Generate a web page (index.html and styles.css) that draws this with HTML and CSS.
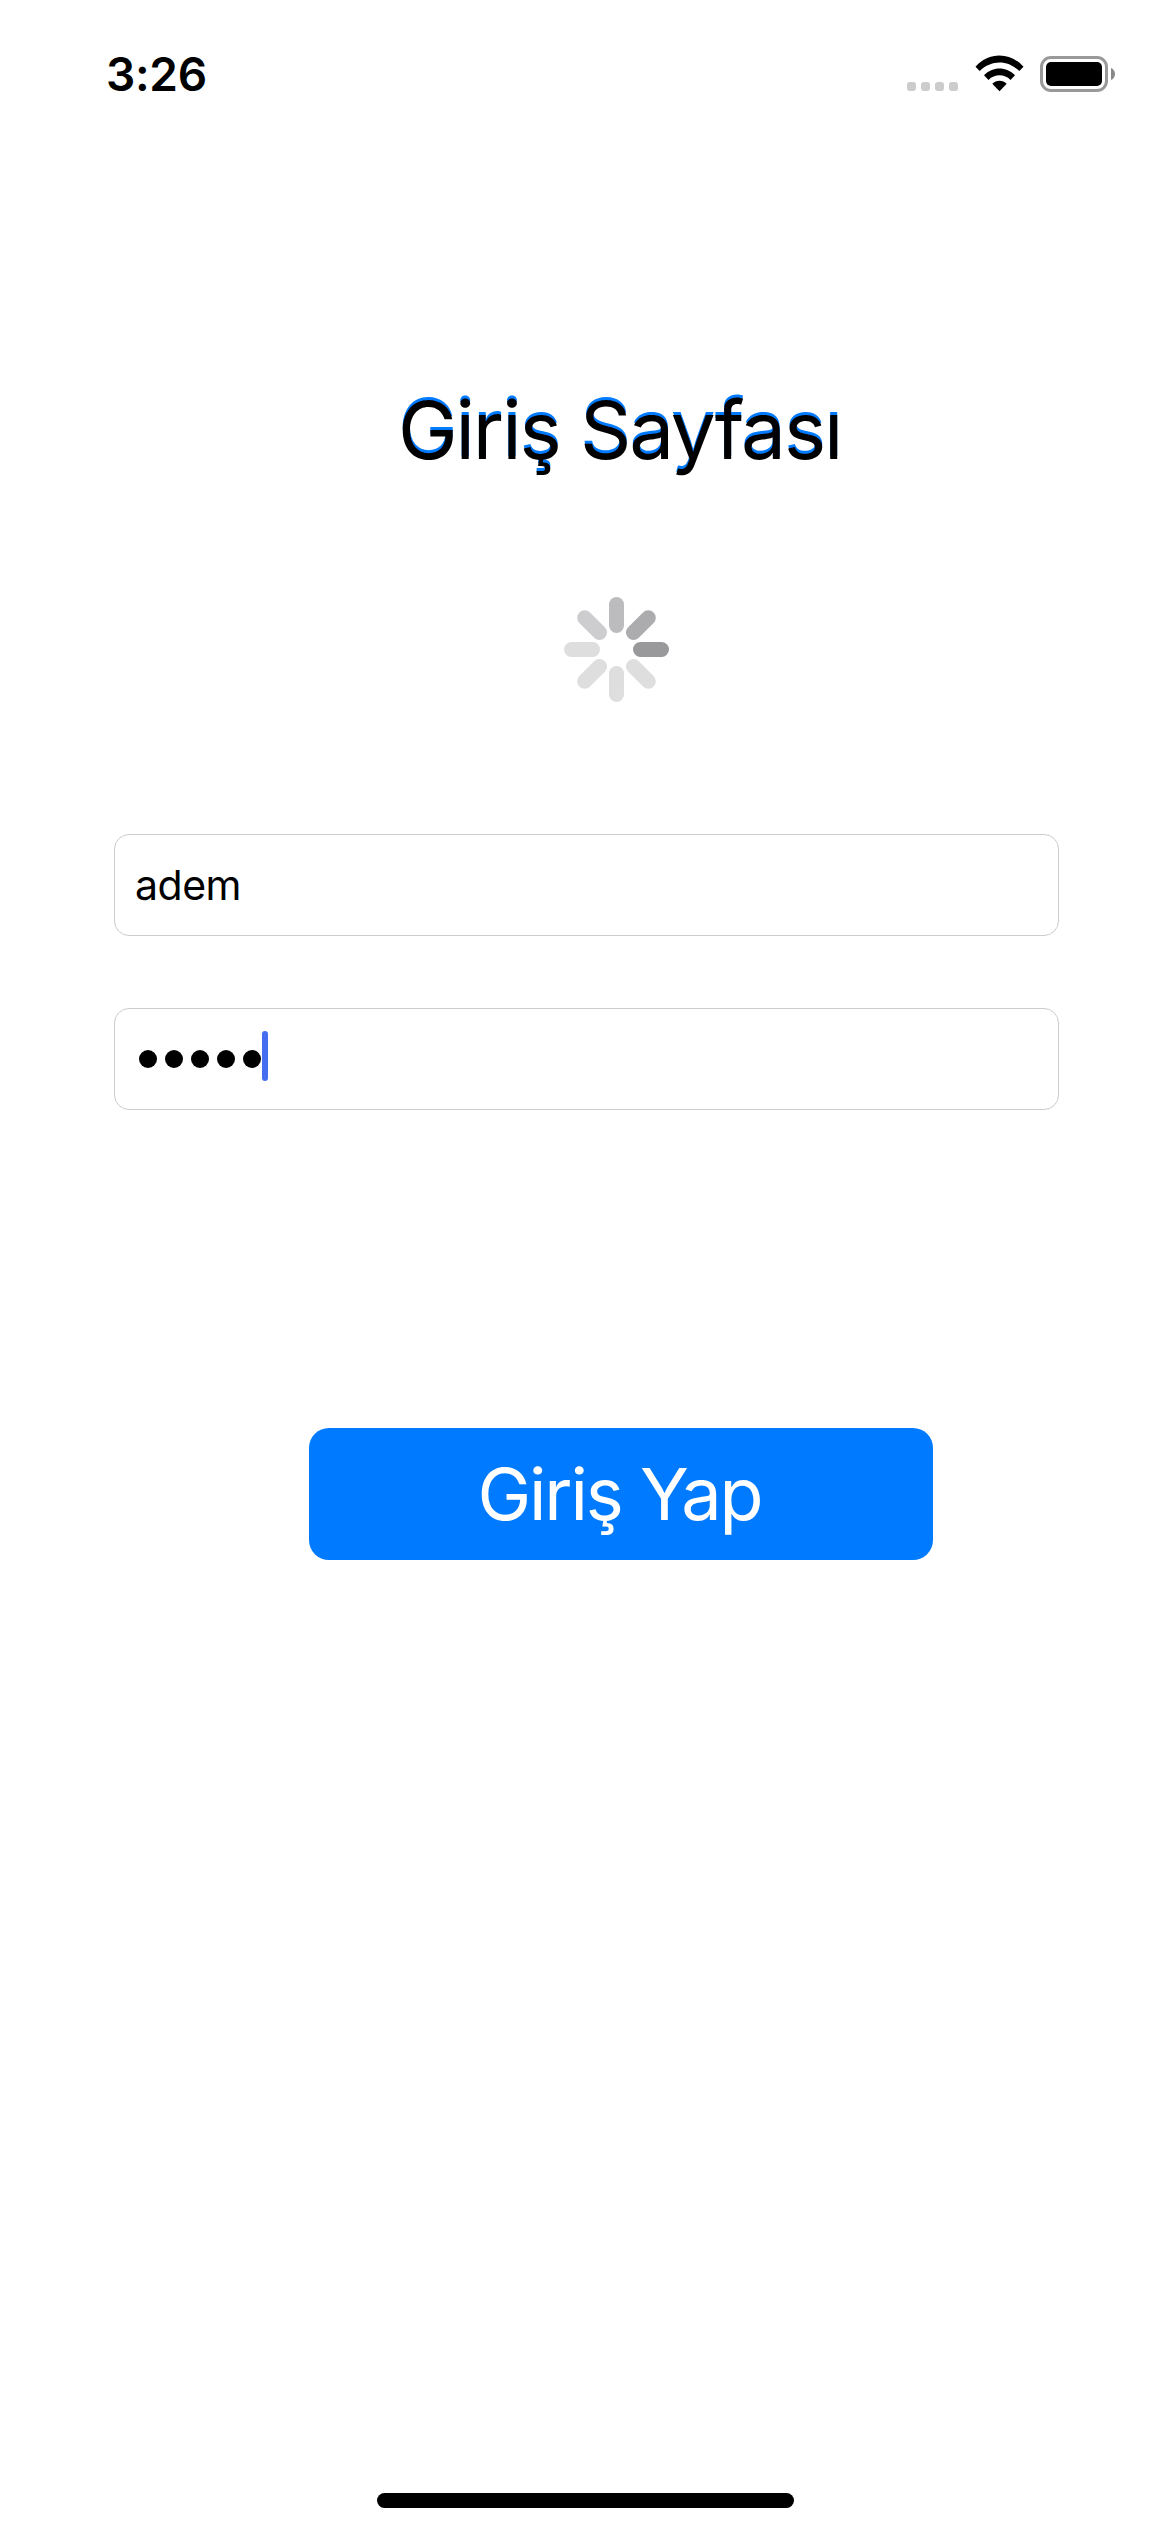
FILE: index.html
```html
<!DOCTYPE html>
<html lang="tr">
<head>
<meta charset="utf-8">
<title>Giriş Sayfası</title>
<link rel="stylesheet" href="styles.css">
</head>
<body>
<div class="screen">
  <header class="status-bar">
    <span class="time">3:26</span>
    <div class="status-icons">
      <div class="signal"><i></i><i></i><i></i><i></i></div>
      <svg class="wifi" width="49" height="37" viewBox="0 0 49 37">
        <path d="M0.5 11.7C14 -3.2 35 -3.2 48.5 11.7L44.3 16.1C32.8 4.6 16.2 4.6 4.7 16.1Z"/>
        <path d="M9 20.2C17.6 11.2 31.4 11.2 40 20.2L35.5 25C29.5 18.8 19.5 18.8 13.5 25Z"/>
        <path d="M17.3 28.8C21.2 24.7 27.8 24.7 31.7 28.8L24.5 36.3Z"/>
      </svg>
      <div class="battery">
        <div class="battery-case"><div class="battery-level"></div></div>
        <svg class="battery-tip" width="4" height="12" viewBox="0 0 4 12"><path d="M0 0C5.3 2 5.3 10 0 12Z"/></svg>
      </div>
    </div>
  </header>
  <main class="login">
    <h1 class="title">Giriş Sayfası</h1>
    <svg class="spinner" width="105" height="105" viewBox="-52.5 -52.5 105 105">
      <rect class="s4" x="16.5" y="-7.5" width="36" height="15" rx="7.5"/>
      <rect class="s3" x="16.5" y="-7.5" width="36" height="15" rx="7.5" transform="rotate(-45)"/>
      <rect class="s2" x="16.5" y="-7.5" width="36" height="15" rx="7.5" transform="rotate(-90)"/>
      <rect class="s1" x="16.5" y="-7.5" width="36" height="15" rx="7.5" transform="rotate(-135)"/>
      <rect class="s0" x="16.5" y="-7.5" width="36" height="15" rx="7.5" transform="rotate(180)"/>
      <rect class="s0" x="16.5" y="-7.5" width="36" height="15" rx="7.5" transform="rotate(135)"/>
      <rect class="s0" x="16.5" y="-7.5" width="36" height="15" rx="7.5" transform="rotate(90)"/>
      <rect class="s0" x="16.5" y="-7.5" width="36" height="15" rx="7.5" transform="rotate(45)"/>
    </svg>
    <div class="fields">
      <div class="field">adem</div>
      <div class="field password">
        <div class="mask"><i></i><i></i><i></i><i></i><i></i></div>
        <div class="caret"></div>
      </div>
    </div>
    <button class="submit" type="button">Giriş <span class="kern">Y</span>ap</button>
  </main>
  <div class="home-indicator"></div>
</div>
</body>
</html>
```
FILE: styles.css
```css
* { box-sizing: border-box; }
body { margin: 0; background: #fff; color: #000; font-family: Inter, "Liberation Sans", sans-serif; }
.screen { width: 1170px; height: 2532px; display: flex; flex-direction: column; overflow: hidden; }

.status-bar { height: 141px; padding: 46px 55px 0 106px; display: flex; justify-content: space-between; align-items: flex-start; }
.time { font-size: 46px; line-height: 57px; font-weight: 600; letter-spacing: -0.3px; }
.status-icons { display: flex; align-items: flex-start; padding-top: 9px; }
.signal { display: flex; gap: 5px; margin: 27px 17px 0 0; }
.signal i { width: 9px; height: 9px; border-radius: 3px; background: #ccc; }
.wifi { display: block; margin-right: 16px; }
.battery { display: flex; align-items: center; gap: 3px; margin-top: 1px; }
.battery-case { width: 68px; height: 36px; padding: 3px; border: 3px solid #999; border-radius: 11px; }
.battery-level { height: 24px; border-radius: 5px; background: #000; }
.battery-tip { display: block; fill: #888; }

.login { flex: 1; }
.title { margin: 239px 0 0 398px; height: 100px; font-size: 80px; line-height: 100px; font-weight: 400; letter-spacing: -2.1px; white-space: nowrap; text-shadow: 0 -3px 0 #007aff; }
.spinner { display: block; margin: 117px 0 0 564px; }
.s4 { fill: #99999b; }
.s3 { fill: #acacae; }
.s2 { fill: #bcbcbe; }
.s1 { fill: #cdcdcf; }
.s0 { fill: #dedede; }

.fields { display: flex; flex-direction: column; gap: 72px; width: 945px; margin: 132px 0 0 114px; }
.field { display: flex; align-items: center; height: 102px; padding: 0 20px; border: 1px solid #ccc; border-radius: 15px; font-size: 41px; letter-spacing: -0.5px; }
.password { padding: 0 24px; }
.mask { display: flex; gap: 8px; }
.mask i { width: 18px; height: 18px; border-radius: 50%; background: #000; }
.caret { width: 6px; height: 50px; margin: -6px 0 0 1px; border-radius: 3px; background: #456df2; }

.submit { display: block; width: 624px; height: 132px; margin: 318px 0 0 309px; padding: 0 3px 0 0; border: 0; border-radius: 20px; background: #007aff; color: #fff; font: 400 72px/132px Inter, "Liberation Sans", sans-serif; letter-spacing: -2.1px; }
.kern { letter-spacing: -7.5px; }
.home-indicator { width: 417px; height: 15px; margin: 0 0 24px 377px; border-radius: 7.5px; background: #000; }
```
